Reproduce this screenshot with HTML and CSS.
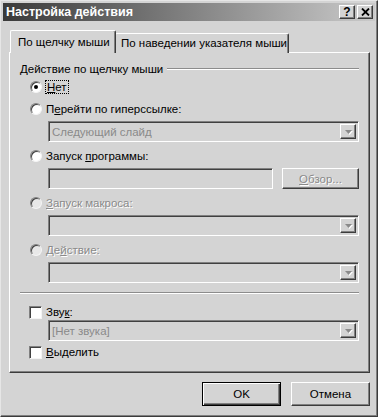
FILE: index.html
```html
<!DOCTYPE html>
<html lang="ru">
<head>
    <meta charset="UTF-8">
    <title>Настройка действия</title>
    <link rel="stylesheet" href="styles.css">
</head>
<body>

<div class="window">
    <!-- Заголовок окна -->
    <div class="titlebar">
        <span class="title">Настройка действия</span>
        <div class="caption-btns">
            <span class="cbtn help">?</span>
            <span class="cbtn">
                <svg width="9" height="8" viewBox="0 0 9 8"><path d="M1 0.5 L8 7.5 M8 0.5 L1 7.5" stroke="#000" stroke-width="1.8"/></svg>
            </span>
        </div>
    </div>

    <!-- Вкладки -->
    <div class="tabs">
        <div class="tab active">По щелчку мыши</div>
        <div class="tab">По наведении указателя мыши</div>
    </div>

    <div class="panel">
        <div class="legend"><span>Действие по щелчку мыши</span><div class="line"></div></div>

        <div class="opt opt-first"><span class="radio checked"></span><span class="focus"><u>Н</u>ет</span></div>

        <div class="opt"><span class="radio"></span><span>П<u>е</u>рейти по гиперссылке:</span></div>
        <div class="combo"><span class="value">Следующий слайд</span><span class="drop"><svg width="7" height="4" viewBox="0 0 7 4"><path d="M0 0 H7 L3.5 4 Z" fill="#8a8a8a"/></svg></span></div>

        <div class="opt"><span class="radio"></span><span>Запуск <u>п</u>рограммы:</span></div>
        <div class="field-row">
            <div class="field"></div>
            <div class="btn btn-disabled"><u>О</u>бзор...</div>
        </div>

        <div class="opt disabled"><span class="radio"></span><span><u>З</u>апуск макроса:</span></div>
        <div class="combo"><span class="value"></span><span class="drop"><svg width="7" height="4" viewBox="0 0 7 4"><path d="M0 0 H7 L3.5 4 Z" fill="#8a8a8a"/></svg></span></div>

        <div class="opt disabled"><span class="radio"></span><span>Де<u>й</u>ствие:</span></div>
        <div class="combo"><span class="value"></span><span class="drop"><svg width="7" height="4" viewBox="0 0 7 4"><path d="M0 0 H7 L3.5 4 Z" fill="#8a8a8a"/></svg></span></div>

        <div class="separator"></div>

        <div class="check-row check-first"><span class="checkbox"></span><span>Зву<u>к</u>:</span></div>
        <div class="combo combo-tight"><span class="value">[Нет звука]</span><span class="drop"><svg width="7" height="4" viewBox="0 0 7 4"><path d="M0 0 H7 L3.5 4 Z" fill="#8a8a8a"/></svg></span></div>
        <div class="check-row"><span class="checkbox"></span><span><u>В</u>ыделить</span></div>
    </div>

    <!-- Кнопки -->
    <div class="footer">
        <div class="btn btn-default">OK</div>
        <div class="btn">Отмена</div>
    </div>
</div>

</body>
</html>
```

FILE: styles.css
```css
/* Общие стили */
body {
    margin: 0;
    font-family: "Liberation Sans", Arial, sans-serif;
    font-size: 11.5px;
    color: #000;
    background: #d4d4d4;
}

u {
    text-decoration: underline;
    text-underline-offset: 1px;
}

/* Окно */
.window {
    width: 378px;
    height: 417px;
    box-sizing: border-box;
    background: #d4d4d4;
    border: 1px solid;
    border-color: #e6e6e6 #3c3c3c #3c3c3c #e6e6e6;
    box-shadow: inset -1px -1px #808080;
    padding: 2px;
    display: flex;
    flex-direction: column;
}

/* Заголовок */
.titlebar {
    height: 18px;
    flex-shrink: 0;
    background: linear-gradient(to right, #3a3a3a, #cacaca);
    display: flex;
    align-items: center;
    justify-content: space-between;
    padding: 0 2px 0 3px;
}

.title {
    color: #fff;
    font-weight: bold;
    font-size: 12.5px;
}

.caption-btns {
    display: flex;
    gap: 2px;
}

.cbtn {
    width: 16px;
    height: 14px;
    box-sizing: border-box;
    background: #d4d4d4;
    border: 1px solid;
    border-color: #fff #3c3c3c #3c3c3c #fff;
    box-shadow: inset -1px -1px #808080;
    display: flex;
    align-items: center;
    justify-content: center;
}

.cbtn.help {
    font-weight: bold;
    font-size: 12px;
    line-height: 1;
}

/* Вкладки */
.tabs {
    display: flex;
    align-items: flex-end;
    margin: 9px 0 -1px 7px;
    height: 23px;
    flex-shrink: 0;
    position: relative;
    z-index: 1;
}

.tab {
    height: 20px;
    box-sizing: border-box;
    padding: 3px 0 0 5px;
    white-space: nowrap;
    background: #d4d4d4;
    border: 1px solid;
    border-bottom: none;
    border-color: #fff #3c3c3c #fff #fff;
    box-shadow: inset -1px 0 #808080;
    border-radius: 2px 2px 0 0;
    width: 174px;
}

.tab.active {
    height: 23px;
    width: 106px;
    padding-top: 5px;
    padding-left: 7px;
    margin-right: -1px;
    position: relative;
    z-index: 2;
}

/* Панель вкладки */
.panel {
    margin-left: 6px;
    width: 361px;
    height: 321px;
    flex-shrink: 0;
    box-sizing: border-box;
    border: 1px solid;
    border-color: #fff #3c3c3c #3c3c3c #fff;
    box-shadow: inset -1px -1px #808080;
    padding: 8px 10px 0 10px;
}

.legend {
    display: flex;
    align-items: center;
    height: 16px;
    gap: 4px;
}

.legend .line {
    flex: 1;
    border-top: 1px solid #8c8c8c;
    border-bottom: 1px solid #fff;
}

/* Переключатели */
.opt {
    display: flex;
    align-items: center;
    gap: 4px;
    height: 16px;
    padding-left: 10px;
    margin-top: 6px;
}

.opt-first {
    margin-top: 2px;
}

.radio {
    width: 12px;
    height: 12px;
    box-sizing: border-box;
    border-radius: 50%;
    background: #fff;
    border: 1px solid;
    border-color: #808080 #f4f4f4 #f4f4f4 #808080;
    box-shadow: inset 1px 1px #404040;
    position: relative;
}

.radio.checked::after {
    content: "";
    position: absolute;
    left: 3px;
    top: 3px;
    width: 4px;
    height: 4px;
    border-radius: 50%;
    background: #000;
}

.disabled {
    color: #8a8a8a;
    text-shadow: 1px 1px #fff;
}

.disabled .radio {
    background: #e8e8e8;
}

.focus {
    outline: 1px dotted #000;
    padding: 0 1px;
}

/* Поля и списки */
.combo {
    margin: 4px 0 0 28px;
    height: 21px;
    box-sizing: border-box;
    border: 1px solid;
    border-color: #808080 #fff #fff #808080;
    box-shadow: inset 1px 1px #404040, inset -1px -1px #d4d4d4;
    display: flex;
    align-items: center;
    justify-content: space-between;
    padding: 0 2px 0 3px;
}

.combo-tight {
    margin-top: 0;
}

.combo .value {
    color: #8a8a8a;
}

.drop {
    width: 16px;
    height: 15px;
    box-sizing: border-box;
    border: 1px solid;
    border-color: #fff #3c3c3c #3c3c3c #fff;
    box-shadow: inset -1px -1px #808080;
    display: flex;
    align-items: center;
    justify-content: center;
    background: #d4d4d4;
}

.drop svg {
    filter: drop-shadow(1px 1px 0 #fff);
}

.field-row {
    display: flex;
    gap: 9px;
    margin: 4px 0 0 28px;
}

.field {
    flex: 1;
    height: 21px;
    box-sizing: border-box;
    border: 1px solid;
    border-color: #808080 #fff #fff #808080;
    box-shadow: inset 1px 1px #404040;
}

/* Кнопки */
.btn {
    width: 79px;
    height: 24px;
    box-sizing: border-box;
    border: 1px solid;
    border-color: #fff #3c3c3c #3c3c3c #fff;
    box-shadow: inset -1px -1px #808080;
    display: flex;
    align-items: center;
    justify-content: center;
    background: #d4d4d4;
}

.field-row .btn {
    width: 77px;
    height: 21px;
}

.btn-disabled {
    color: #8a8a8a;
    text-shadow: 1px 1px #fff;
}

.btn-default {
    border: 1px solid #000;
    box-shadow: inset 1px 1px #fff, inset -1px -1px #3c3c3c, inset -2px -2px #808080;
}

.separator {
    margin-top: 9px;
    border-top: 1px solid #8c8c8c;
    border-bottom: 1px solid #fff;
}

/* Флажки */
.check-row {
    display: flex;
    align-items: center;
    gap: 4px;
    height: 16px;
    padding-left: 9px;
    margin-top: 3px;
}

.check-first {
    margin-top: 10px;
}

.checkbox {
    width: 13px;
    height: 13px;
    box-sizing: border-box;
    background: #fff;
    border: 1px solid;
    border-color: #808080 #f4f4f4 #f4f4f4 #808080;
    box-shadow: inset 1px 1px #404040;
}

.footer {
    display: flex;
    justify-content: flex-end;
    gap: 10px;
    margin-top: 9px;
    padding-right: 5px;
}
```
